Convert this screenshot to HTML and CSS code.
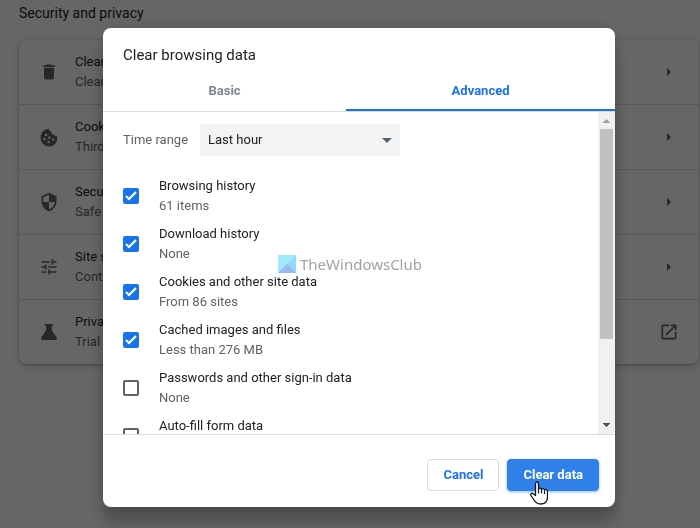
FILE: index.html
```html
<!DOCTYPE html>
<html lang="en">
<head>
<meta charset="utf-8">
<title>Settings - Security and privacy</title>
<link rel="stylesheet" href="styles.css">
</head>
<body>
<main class="page">
  <h2 class="page-title">Security and privacy</h2>
  <ul class="card">
    <li class="row">
      <svg class="row-icon" viewBox="0 0 24 24"><path d="M6 19c0 1.100.9 2 2 2h8c1.100 0 2-.9 2-2V7H6v12zM19 4h-3.500l-1-1h-5l-1 1H5v2h14V4z"/></svg>
      <div class="row-text"><div class="label">Clear</div><div class="sub">Clear</div></div>
      <svg class="row-end" viewBox="0 0 20 20"><path d="M8 6l4 4-4 4z"/></svg>
    </li>
    <li class="row">
      <svg class="row-icon" viewBox="0 0 24 24"><path fill-rule="evenodd" d="M21.600 11.100c-1.300.5-2.900-.3-3-1.900-2.200.5-4.200-1.500-3.600-3.700-2 .1-3.300-1.500-2.900-3.400C6.500 2 2 6.500 2 12a10 10 0 1 0 19.600-.9zM8.500 8a1.500 1.500 0 1 1 0 3 1.500 1.500 0 0 1 0-3zM6.500 13a1.500 1.500 0 1 1 0 3 1.500 1.500 0 0 1 0-3zM12.500 11.500a1.500 1.500 0 1 1 0 3 1.500 1.500 0 0 1 0-3zM11.500 16.500a1.500 1.500 0 1 1 0 3 1.500 1.500 0 0 1 0-3zM17 13.500a1.500 1.500 0 1 1 0 3 1.500 1.500 0 0 1 0-3z"/></svg>
      <div class="row-text"><div class="label">Cookies</div><div class="sub">Third-party</div></div>
      <svg class="row-end" viewBox="0 0 20 20"><path d="M8 6l4 4-4 4z"/></svg>
    </li>
    <li class="row">
      <svg class="row-icon" viewBox="0 0 24 24"><path d="M12 1L3 5v6c0 5.550 3.840 10.740 9 12 5.160-1.260 9-6.450 9-12V5l-9-4zm0 10.990h7c-.530 4.120-3.280 7.790-7 8.940V12H5V6.300l7-3.110v8.800z"/></svg>
      <div class="row-text"><div class="label">Security</div><div class="sub">Safe</div></div>
      <svg class="row-end" viewBox="0 0 20 20"><path d="M8 6l4 4-4 4z"/></svg>
    </li>
    <li class="row">
      <svg class="row-icon" viewBox="0 0 24 24"><path d="M3 17v2h6v-2H3zM3 5v2h10V5H3zm10 16v-2h8v-2h-8v-2h-2v6h2zM7 9v2H3v2h4v2h2V9H7zm14 4v-2H11v2h10zm-6-4h2V7h4V5h-4V3h-2v6z"/></svg>
      <div class="row-text"><div class="label">Site settings</div><div class="sub">Controls</div></div>
      <svg class="row-end" viewBox="0 0 20 20"><path d="M8 6l4 4-4 4z"/></svg>
    </li>
    <li class="row">
      <svg class="row-icon" viewBox="0 0 24 24"><path d="M7 2.500h10v2h-1.500V10l5.700 8.500c.8 1.200 0 3-1.600 3H4.400c-1.600 0-2.400-1.800-1.600-3L8.500 10V4.500H7z"/></svg>
      <div class="row-text"><div class="label">Privacy</div><div class="sub">Trial</div></div>
      <svg class="row-end" viewBox="0 0 24 24"><path d="M19 19H5V5h7V3H5a2 2 0 0 0-2 2v14a2 2 0 0 0 2 2h14c1.100 0 2-.9 2-2v-7h-2v7zM14 3v2h3.590l-9.830 9.830 1.410 1.410L19 6.410V10h2V3h-7z"/></svg>
    </li>
  </ul>
</main>

<div class="overlay">
  <section class="dialog" role="dialog" aria-labelledby="dialog-title">
    <h1 class="dialog-title" id="dialog-title">Clear browsing data</h1>
    <div class="tabs" role="tablist">
      <button class="tab" role="tab" type="button" aria-selected="false">Basic</button>
      <button class="tab selected" role="tab" type="button" aria-selected="true">Advanced</button>
    </div>
    <div class="body">
      <div class="content">
        <div class="range">
          <label class="sub" for="range">Time range</label>
          <div class="select-wrap">
            <select id="range"><option>Last hour</option></select>
            <svg class="arrow" viewBox="0 0 10 5"><path d="M0 0h10L5 5z"/></svg>
          </div>
        </div>
        <label class="item">
          <span class="check"><input type="checkbox" checked><svg viewBox="0 0 16 16"><path d="M3 8l3 3 7-7"/></svg></span>
          <span class="item-text"><span class="label">Browsing history</span><span class="sub">61 items</span></span>
        </label>
        <label class="item">
          <span class="check"><input type="checkbox" checked><svg viewBox="0 0 16 16"><path d="M3 8l3 3 7-7"/></svg></span>
          <span class="item-text"><span class="label">Download history</span><span class="sub">None</span></span>
        </label>
        <label class="item">
          <span class="check"><input type="checkbox" checked><svg viewBox="0 0 16 16"><path d="M3 8l3 3 7-7"/></svg></span>
          <span class="item-text"><span class="label">Cookies and other site data</span><span class="sub">From 86 sites</span></span>
        </label>
        <label class="item">
          <span class="check"><input type="checkbox" checked><svg viewBox="0 0 16 16"><path d="M3 8l3 3 7-7"/></svg></span>
          <span class="item-text"><span class="label">Cached images and files</span><span class="sub">Less than 276 MB</span></span>
        </label>
        <label class="item">
          <span class="check"><input type="checkbox"></span>
          <span class="item-text"><span class="label">Passwords and other sign-in data</span><span class="sub">None</span></span>
        </label>
        <label class="item">
          <span class="check"><input type="checkbox"></span>
          <span class="item-text"><span class="label">Auto-fill form data</span></span>
        </label>
      </div>
      <div class="scrollbar">
        <svg class="scroll-arrow up" viewBox="0 0 17 17"><path d="M5 11h7v-1h-1V9h-1V8H9V7H8v1H7v1H6v1H5z"/></svg>
        <div class="track"><div class="thumb"></div></div>
        <svg class="scroll-arrow" viewBox="0 0 17 17"><path d="M5 6h7v1h-1v1h-1v1H9v1H8V9H7V8H6V7H5z"/></svg>
      </div>
    </div>
    <div class="footer">
      <button class="btn" type="button">Cancel</button>
      <button class="btn primary" type="button">Clear data</button>
    </div>
    <div class="watermark">
      <svg viewBox="0 0 18 18"><path fill="#8edcfa" d="M0 0h18v18H0z"/><path fill="#a1e8fc" d="M0 0h18L0 18z"/><path fill="#9bb8f3" d="M0 18l9-9 9 9z"/></svg>
      <span>TheWindowsClub</span>
    </div>
    <svg class="cursor" viewBox="0 0 18 24"><path fill="#fff" stroke="#111827" stroke-width="1.300" stroke-linejoin="round" d="M5.500 14.500V2.500C5.500.5 8.500.5 8.500 2.500V8c.3-1.300 3-1.200 3 .5.500-1.300 3-1 3 .7.500-1 3-.6 3 1V16c0 4.500-2.500 7-7 7-3.500 0-5-1.500-6.500-4L1 14.500c-1-1.700 1-3 2.300-1.700z"/><path fill="none" stroke="#111827" stroke-width="1.200" d="M8.500 8v4.500M11.500 8.500v4M14.500 9.500v3.500"/></svg>
  </section>
</div>
</body>
</html>
```

FILE: styles.css
```css
* { box-sizing: border-box; }

body {
  margin: 0;
  min-height: 100vh;
  overflow: hidden;
  background: #fff;
  color: #202124;
  font-family: Roboto, "Liberation Sans", sans-serif;
  font-size: 13px;
  line-height: 20px;
}

.page { padding: 3px 1px 0 19px; }

.page-title {
  margin: 0 0 17px;
  font-size: 14px;
  font-weight: 400;
  line-height: 20px;
}

.card {
  margin: 0;
  padding: 0;
  list-style: none;
  border-radius: 8px;
  box-shadow: 0 1px 2px rgba(60, 64, 67, .3), 0 2px 6px 2px rgba(60, 64, 67, .15);
}

.row {
  display: flex;
  align-items: center;
  gap: 16px;
  height: 65px;
  padding: 0 20px;
}

.row:first-child { height: 64px; }
.row + .row { border-top: 1px solid #dadce0; }

.row-icon, .row-end {
  flex: none;
  width: 20px;
  height: 20px;
  fill: #5f6368;
}

.row-text {
  flex: 1;
  white-space: nowrap;
}

.label { color: #202124; }
.sub { color: #5f6368; }

.overlay {
  position: fixed;
  inset: 0;
  display: flex;
  padding: 28px 85px 21px 103px;
  background: rgba(0, 0, 0, .6);
}

.dialog {
  position: relative;
  display: flex;
  flex: 1;
  flex-direction: column;
  min-width: 0;
  background: #fff;
  border-radius: 8px;
  box-shadow: 0 0 16px rgba(0, 0, 0, .12), 0 16px 16px rgba(0, 0, 0, .24);
}

.dialog-title {
  margin: 0;
  padding: 17px 20px 5px;
  font-size: 15px;
  font-weight: 400;
  line-height: 20px;
}

.tabs {
  display: flex;
  height: 42px;
  border-bottom: 1px solid #dadce0;
}

.tab {
  flex: 1 1 auto;
  padding: 0;
  border: 0;
  background: none;
  color: #80868b;
  font: 700 13px/20px Roboto, sans-serif;
}

.tab.selected {
  color: #1a73e8;
  box-shadow: inset 0 -2px #1a73e8;
}

.body {
  display: flex;
  flex: 1;
  min-height: 0;
}

.content {
  flex: 1;
  padding: 12px 20px 0;
  overflow: hidden;
}

.range {
  display: flex;
  align-items: center;
  gap: 12px;
  margin-bottom: 16px;
}

.select-wrap {
  display: grid;
  align-items: center;
  width: 200px;
}

select {
  grid-area: 1 / 1;
  height: 32px;
  padding: 0 8px;
  border: 0;
  border-radius: 4px;
  appearance: none;
  background: #f1f3f4;
  color: #202124;
  font: inherit;
}

.arrow {
  grid-area: 1 / 1;
  justify-self: end;
  width: 10px;
  height: 5px;
  margin-right: 8px;
  fill: #5f6368;
  pointer-events: none;
}

.item {
  display: flex;
  align-items: center;
  gap: 20px;
  height: 48px;
}

.check { display: grid; }
.check > * { grid-area: 1 / 1; }

.check input {
  width: 16px;
  height: 16px;
  margin: 0;
  appearance: none;
  border: 2px solid #5f6368;
  border-radius: 2px;
}

.check input:checked {
  border-color: #1a73e8;
  background: #1a73e8;
}

.check svg {
  width: 16px;
  height: 16px;
  fill: none;
  stroke: #fff;
  stroke-width: 2;
  pointer-events: none;
}

.item-text {
  display: flex;
  flex-direction: column;
  min-height: 40px;
}

.scrollbar {
  display: flex;
  flex-direction: column;
  width: 17px;
  background: #f1f1f1;
}

.scroll-arrow {
  width: 17px;
  height: 17px;
  fill: #505050;
}

.scroll-arrow.up { fill: #a3a3a3; }

.track {
  flex: 1;
  padding: 0 2px;
}

.thumb {
  height: 73%;
  background: #c1c1c1;
}

.footer {
  display: flex;
  justify-content: flex-end;
  gap: 8px;
  padding: 24px 16px 16px;
  border-top: 1px solid #dadce0;
}

.btn {
  height: 32px;
  padding: 0 15px;
  border: 1px solid #dadce0;
  border-radius: 4px;
  background: #fff;
  color: #1a73e8;
  font: 700 13px/20px Roboto, sans-serif;
}

.btn.primary {
  border-color: #3080e9;
  background: #3080e9;
  color: #fff;
  box-shadow: 0 1px 3px rgba(26, 115, 232, .5);
}

.watermark {
  position: absolute;
  top: 226px;
  left: 175px;
  display: flex;
  align-items: center;
  gap: 4px;
  color: #a3a3a3;
  font-family: "Noto Sans", sans-serif;
  font-size: 15px;
}

.watermark svg {
  width: 18px;
  height: 18px;
}

.cursor {
  position: absolute;
  right: 67px;
  bottom: 2px;
  width: 18px;
  height: 24px;
}
```
